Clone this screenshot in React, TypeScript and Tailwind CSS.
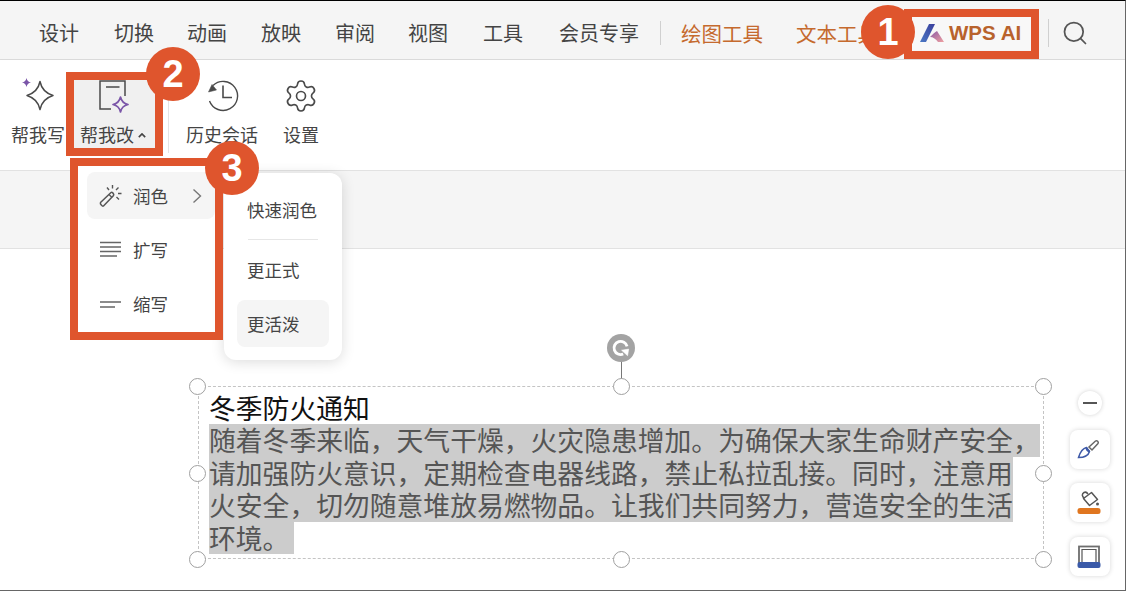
import type { ReactNode } from "react";
import { Search, Settings } from "lucide-react";

const CJK = "font-['Noto_Sans_CJK_SC','Microsoft_YaHei',sans-serif]";

const tabs = [
  { label: "设计", className: "ml-[39px]" },
  { label: "切换", className: "ml-[35px]" },
  { label: "动画", className: "ml-[33px]" },
  { label: "放映", className: "ml-[34px]" },
  { label: "审阅", className: "ml-[34px]" },
  { label: "视图", className: "ml-[33px]" },
  { label: "工具", className: "ml-[35px]" },
  { label: "会员专享", className: "ml-[36px]" },
];

const bodyLines = [
  "随着冬季来临，天气干燥，火灾隐患增加。为确保大家生命财产安全，",
  "请加强防火意识，定期检查电器线路，禁止私拉乱接。同时，注意用",
  "火安全，切勿随意堆放易燃物品。让我们共同努力，营造安全的生活",
  "环境。",
];

const handles = [
  "left-[189px] top-[377px]",
  "left-[613px] top-[377px]",
  "left-[1035px] top-[377px]",
  "left-[189px] top-[464px]",
  "left-[1035px] top-[464px]",
  "left-[189px] top-[550px]",
  "left-[613px] top-[550px]",
  "left-[1035px] top-[550px]",
];

function Callout({ n, className }: { n: number; className: string }) {
  return (
    <div
      className={`absolute flex h-[54px] w-[54px] items-center justify-center rounded-full bg-[#df552d] font-['Liberation_Sans',sans-serif] text-[38px] leading-none font-bold text-white ${className}`}
    >
      {n}
    </div>
  );
}

function RibbonLabel({ children }: { children: string }) {
  return <span className="mt-[8px] text-[18px] leading-[24px] whitespace-nowrap text-[#444]">{children}</span>;
}

function WriteIcon() {
  return (
    <svg viewBox="0 0 36 36" fill="none" className="h-[36px] w-[36px]">
      <path
        d="M20 3.500c1.500 7.500 5 11.500 13 14-8 2.500-11.500 6.500-13 14-1.500-7.500-5-11.500-13-14 8-2.500 11.500-6.500 13-14z"
        stroke="#4a4a4a"
        strokeWidth="1.500"
        strokeLinejoin="round"
      />
      <path
        d="M6.500 0c.6 2.700 1.800 3.900 4.500 4.500-2.700.6-3.900 1.800-4.500 4.500-.6-2.700-1.800-3.900-4.500-4.500 2.700-.6 3.900-1.800 4.500-4.500z"
        fill="#7a55a8"
      />
    </svg>
  );
}

function ReviseIcon() {
  return (
    <svg viewBox="0 0 36 36" fill="none" className="h-[36px] w-[36px]">
      <path d="M14 31H3V3h25v15" stroke="#4a4a4a" strokeWidth="1.500" />
      <path d="M9 9h13.500" stroke="#4a4a4a" strokeWidth="1.500" />
      <path
        d="M23.500 19c1 4.500 3 6.500 7.500 7.500-4.500 1-6.500 3-7.500 7.500-1-4.500-3-6.500-7.500-7.500 4.500-1 6.500-3 7.500-7.500z"
        stroke="#7a55a8"
        strokeWidth="1.700"
        strokeLinejoin="round"
      />
    </svg>
  );
}

function HistoryIcon() {
  return (
    <svg viewBox="0 0 36 36" fill="none" className="h-[36px] w-[36px]" stroke="#4a4a4a" strokeWidth="1.400">
      <path d="M9 7.500A14.500 14.500 0 1 1 5.500 23" />
      <path d="M4.500 14l8-2-4.500-5.500z" fill="#4a4a4a" strokeWidth="0.500" />
      <path d="M19 7.500V19.500H28" strokeWidth="1.600" />
    </svg>
  );
}

function WandIcon() {
  return (
    <svg viewBox="0 0 24 24" fill="none" className="h-[24px] w-[24px]" stroke="#555">
      <path d="M1.500 18.500 12 8.500c1-.8 3.500 1.500 2.500 3L4.500 22c-1 .8-3.800-2-3-3.500z" strokeWidth="1.500" />
      <path d="M10 10.500l3 3" strokeWidth="1.200" />
      <path d="M13.500 1v3.500M19.500 3.500l-2.500 2.500M22.500 9.500h-3.500M20 15.500l-2.500-2.500M8 3.500l2 2.500" strokeWidth="1.400" />
    </svg>
  );
}

function ToolButton({ className, children }: { className?: string; children: ReactNode }) {
  return (
    <div className={`flex h-[39px] w-[40px] items-center justify-center rounded-lg bg-white pr-[3px] shadow-[0_0_5px_rgba(0,0,0,0.16)] ${className ?? ""}`}>
      {children}
    </div>
  );
}

export default function App() {
  return (
    <div className={`relative flex h-[591px] w-[1126px] flex-col overflow-hidden border-t border-r border-b border-t-black border-r-[#666] border-b-[#666] bg-white ${CJK}`}>
      {/* tab bar */}
      <div className="flex h-[59px] shrink-0 items-center border-b border-[#dcdcdc] bg-[#f5f5f5] pt-[6px] text-[20px] leading-none text-[#444]">
        {tabs.map((tab) => (
          <span key={tab.label} className={`${tab.className} whitespace-nowrap`}>
            {tab.label}
          </span>
        ))}
        <div className="ml-[21px] h-[24px] w-px bg-[#d0d0d0]" />
        <span className="ml-[20px] text-[20.500px] whitespace-nowrap text-[#c56a2e]">绘图工具</span>
        <span className="ml-[33px] text-[20.500px] whitespace-nowrap text-[#c56a2e]">文本工具</span>
        <div className="ml-[34px] flex h-[34px] w-[119px] items-center gap-[5px] bg-[#f8f8f8] pl-[8px]">
          <svg viewBox="0 0 24 18" className="h-[18px] w-[24px] shrink-0">
            <defs>
              <linearGradient id="wpsLeft" x1="0" y1="1" x2="1" y2="0">
                <stop offset="0" stopColor="#4a78c4" />
                <stop offset="1" stopColor="#3a3f9c" />
              </linearGradient>
              <linearGradient id="wpsRight" x1="0" y1="0" x2="1" y2="1">
                <stop offset="0" stopColor="#8a5aa8" />
                <stop offset="1" stopColor="#f0a0a0" />
              </linearGradient>
            </defs>
            <path d="M9 0h6L6 18H0z" fill="url(#wpsLeft)" />
            <path d="M10 13c3-3 5-5 7-6l7 11h-6c-2-3-5-5-8-5z" fill="url(#wpsRight)" />
          </svg>
          <span className="font-['Liberation_Sans',sans-serif] text-[20.500px] font-bold whitespace-nowrap text-[#b8622c]">
            WPS AI
          </span>
        </div>
        <div className="ml-[17px] h-[28px] w-px bg-[#d0d0d0]" />
        <Search className="ml-[12px] h-[28px] w-[28px] text-[#555]" strokeWidth={1.5} />
      </div>

      {/* ribbon */}
      <div className="flex h-[111px] shrink-0 items-start border-b border-[#e2e2e2] bg-white pl-[11px] shadow-[0_1px_3px_rgba(0,0,0,0.06)]">
        <div className="flex w-[54px] flex-col items-center pt-[18px]">
          <WriteIcon />
          <RibbonLabel>帮我写</RibbonLabel>
        </div>
        <div className="mt-[18px] ml-[8px] flex h-[78px] w-[84px] flex-col items-start bg-[#f0f0f0] pl-[7px]">
          <div className="ml-[17px]">
            <ReviseIcon />
          </div>
          <div className="flex items-center">
            <RibbonLabel>帮我改</RibbonLabel>
            <svg viewBox="0 0 10 6" fill="none" className="mt-[10px] ml-[4px] h-[5px] w-[8px]" stroke="#444" strokeWidth="2">
              <path d="M1 5l4-4 4 4" />
            </svg>
          </div>
        </div>
        <div className="mt-[21px] ml-[11px] h-[72px] w-px bg-[#e4e4e4]" />
        <div className="ml-[17px] flex w-[72px] flex-col items-center pt-[18px]">
          <HistoryIcon />
          <RibbonLabel>历史会话</RibbonLabel>
        </div>
        <div className="ml-[25px] flex w-[36px] flex-col items-center pt-[18px]">
          <Settings className="h-[36px] w-[36px] text-[#4a4a4a]" strokeWidth={1.1} />
          <RibbonLabel>设置</RibbonLabel>
        </div>
      </div>

      {/* grey band below the ribbon */}
      <div className="h-[78px] shrink-0 border-b border-[#e2e2e2] bg-[#f5f5f5]" />
      <div className="flex-1 bg-white" />

      {/* first level menu */}
      <div className="absolute top-[165px] left-[77px] flex h-[167px] w-[139px] flex-col bg-white pt-[6px] pl-[10px] text-[17.500px] leading-none text-[#444]">
        <div className="flex h-[47px] w-[128px] items-center rounded-lg bg-[#f5f5f5] pl-[12px]">
          <WandIcon />
          <span className="ml-[10px]">润色</span>
          <svg viewBox="0 0 10 16" fill="none" className="ml-[24px] h-[16px] w-[10px]" stroke="#777" strokeWidth="1.400">
            <path d="M1.500 1.500 8.500 8l-7 6.500" />
          </svg>
        </div>
        <div className="mt-[8px] flex h-[45px] items-center pl-[12px]">
          <svg viewBox="0 0 24 24" className="h-[24px] w-[24px]" stroke="#666" strokeWidth="1.700">
            <path d="M1 4.500h21M1 9h21M1 13.500h21M1 18h17" />
          </svg>
          <span className="ml-[10px]">扩写</span>
        </div>
        <div className="mt-[9px] flex h-[45px] items-center pl-[12px]">
          <svg viewBox="0 0 24 24" className="h-[24px] w-[24px]" stroke="#666" strokeWidth="1.700">
            <path d="M1 10h21M1 15h15" />
          </svg>
          <span className="ml-[10px]">缩写</span>
        </div>
      </div>

      {/* second level menu */}
      <div className="absolute top-[172px] left-[224px] flex h-[187px] w-[118px] flex-col rounded-xl bg-white px-[13px] text-[17.500px] leading-none text-[#444] shadow-[0_2px_14px_rgba(0,0,0,0.14)]">
        <div className="flex h-[66px] shrink-0 items-center px-[10px] pt-[8px] whitespace-nowrap">快速润色</div>
        <div className="mx-[11px] h-px shrink-0 bg-[#e6e6e6]" />
        <div className="flex h-[60px] shrink-0 items-center px-[10px]">更正式</div>
        <div className="flex h-[47px] shrink-0 items-center rounded-lg bg-[#f5f5f5] px-[10px]">更活泼</div>
      </div>

      {/* text box on the slide */}
      <div className="absolute top-[385px] left-[198px] h-[173px] w-[846px] border border-dashed border-[#c4c4c4]" />
      <div className="absolute top-[348px] left-[621px] h-[38px] w-px bg-[#777]" />
      <div className="absolute top-[333px] left-[607px] flex h-[28px] w-[28px] items-center justify-center rounded-full bg-[#a3a3a3]">
        <svg viewBox="0 0 20 20" fill="none" className="h-[22px] w-[22px]" stroke="white" strokeWidth="2.600">
          <path d="M15.500 8.500A6 6 0 1 0 12 15.500" />
          <path d="M10.500 12l6.500-1-1 6z" fill="white" strokeWidth="0.500" />
        </svg>
      </div>
      {handles.map((position) => (
        <div
          key={position}
          className={`absolute h-[17px] w-[17px] rounded-full border-[1.500px] border-[#a0a0a0] bg-white ${position}`}
        />
      ))}
      <div className="absolute top-[391px] left-[209px] w-[831px] text-[26.800px]">
        <div className="h-[32px] leading-[32px] text-[#111]">冬季防火通知</div>
        {bodyLines.map((line, index) => (
          <div
            key={line}
            className={`h-[32.500px] w-fit bg-[#cccccc] leading-[32.500px] whitespace-nowrap text-[#555] ${index === 3 ? "pr-[5px]" : ""}`}
          >
            {line}
          </div>
        ))}
      </div>

      {/* floating tools */}
      <div className="absolute top-[390px] left-[1070px] flex w-[40px] flex-col items-center">
        <div className="flex h-[24px] w-[24px] items-center justify-center rounded-full bg-white shadow-[0_0_4px_rgba(0,0,0,0.18)]">
          <div className="h-[2px] w-[14px] bg-[#555]" />
        </div>
        <ToolButton className="mt-[15px]">
          <svg viewBox="0 0 24 24" fill="none" className="h-[24px] w-[24px]">
            <path d="M12 9l6.500-6c1.500-1 3.500 1 2.500 2.500l-6 6.500z" stroke="#666" strokeWidth="1.500" />
            <path d="M9.500 9.500c-4.500 1-6.500 5-8 10 5 0 9.500-1 11-6z" stroke="#3f5aa8" strokeWidth="1.500" />
            <path d="M9.500 9.500c0 2 1 3.500 3 4" stroke="#3f5aa8" strokeWidth="2" />
          </svg>
        </ToolButton>
        <ToolButton className="mt-[14px]">
          <svg viewBox="0 0 24 24" fill="none" className="h-[24px] w-[24px]">
            <path d="M6.500 7.500 14.500 1.500 20.500 8.500 12.500 14.500z" stroke="#555" strokeWidth="1.500" strokeLinejoin="round" />
            <path d="M7.500 7c-2.500-1-3-4-.5-5.500 1.500-.8 3 0 4 1.500" stroke="#555" strokeWidth="1.500" />
            <circle cx="20.500" cy="13" r="1.500" fill="#555" />
            <rect x="0.500" y="17" width="23" height="6" rx="2.500" fill="#e0761f" />
          </svg>
        </ToolButton>
        <ToolButton className="mt-[15px]">
          <svg viewBox="0 0 24 24" fill="none" className="h-[24px] w-[24px]">
            <rect x="2" y="1.500" width="20" height="18" stroke="#6e6e6e" strokeWidth="1.800" />
            <path d="M5 18V4.500h14V18" stroke="#555" strokeWidth="1.200" />
            <rect x="0.500" y="17" width="23" height="6" rx="2" fill="#3a5aa8" />
          </svg>
        </ToolButton>
      </div>

      {/* annotation frames */}
      <div className="absolute top-[8px] left-[904px] h-[50px] w-[135px] border-[8px] border-[#df552d]" />
      <div className="absolute top-[71px] left-[66px] h-[84px] w-[97px] border-[8px] border-[#df552d]" />
      <div className="absolute top-[157px] left-[70px] h-[182px] w-[153px] border-[8px] border-[#df552d]" />
      <Callout n={1} className="top-[4px] left-[861px]" />
      <Callout n={2} className="top-[46px] left-[146px]" />
      <Callout n={3} className="top-[140px] left-[205px]" />
    </div>
  );
}
